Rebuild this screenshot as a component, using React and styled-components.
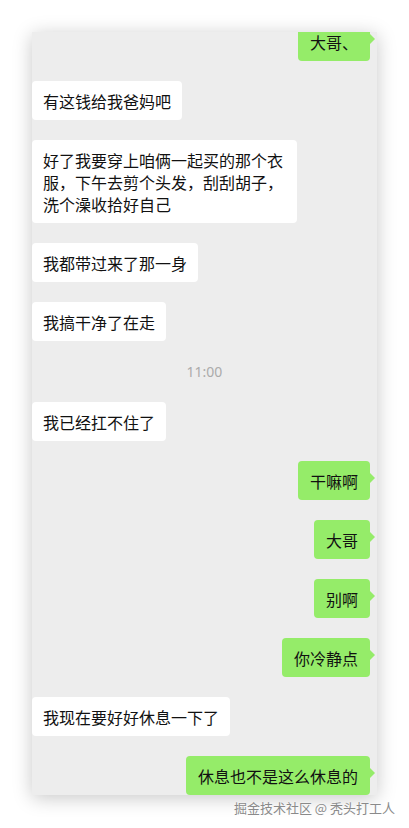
import React from 'react';
import styled, { createGlobalStyle } from 'styled-components';

const GlobalStyle = createGlobalStyle`
  body {
    margin: 0;
    background: #fff;
    font-family: "Noto Sans CJK SC", "Noto Sans", sans-serif;
  }
`;

const Page = styled.div`
  padding: 32px 32px 0;
  display: flex;
  flex-direction: column;
`;

const Panel = styled.section`
  width: 345px;
  height: 763px;
  background: #ededed;
  overflow: hidden;
  box-shadow: 0 3px 18px rgba(0, 0, 0, 0.22);
`;

const List = styled.div`
  display: flex;
  flex-direction: column;
  gap: 20px;
  margin-top: -10px;
`;

const Row = styled.div`
  display: flex;
  justify-content: ${p => (p.$me ? 'flex-end' : 'flex-start')};
  padding-right: ${p => (p.$me ? '7px' : '0')};
`;

const Bubble = styled.div`
  position: relative;
  box-sizing: border-box;
  max-width: 265px;
  padding: 9px ${p => (p.$me ? '12px' : '11px')} 8px;
  border-radius: 4px;
  background: ${p => (p.$me ? '#95ec69' : '#fff')};
  color: #111;
  font-size: 16px;
  line-height: 22px;

  &::after {
    content: '';
    position: absolute;
    top: 12px;
    ${p => (p.$me ? 'right: -10px;' : 'left: -10px;')}
    border: 5px solid transparent;
    ${p => (p.$me ? 'border-left-color: #95ec69;' : 'border-right-color: #fff;')}
  }
`;

const Time = styled.div`
  text-align: center;
  font-family: "Noto Sans", sans-serif;
  font-size: 14px;
  line-height: 21px;
  color: #ababab;
`;

const Mark = styled.div`
  align-self: flex-end;
  margin: 3px -18px 0 0;
  font-size: 13px;
  color: #8a8a8a;
  text-shadow: 0 0 2px #fff;
`;

const messages = [
  { me: true, text: '大哥、' },
  { text: '有这钱给我爸妈吧' },
  { text: '好了我要穿上咱俩一起买的那个衣服，下午去剪个头发，刮刮胡子，洗个澡收拾好自己' },
  { text: '我都带过来了那一身' },
  { text: '我搞干净了在走' },
  { time: '11:00' },
  { text: '我已经扛不住了' },
  { me: true, text: '干嘛啊' },
  { me: true, text: '大哥' },
  { me: true, text: '别啊' },
  { me: true, text: '你冷静点' },
  { text: '我现在要好好休息一下了' },
  { me: true, text: '休息也不是这么休息的' },
];

const App = () => {
  return (
    <Page>
      <GlobalStyle />
      <Panel>
        <List>
          {messages.map((m, i) =>
            m.time ? (
              <Time key={i}>{m.time}</Time>
            ) : (
              <Row key={i} $me={m.me}>
                <Bubble $me={m.me}>{m.text}</Bubble>
              </Row>
            )
          )}
        </List>
      </Panel>
      <Mark>掘金技术社区 @ 秃头打工人</Mark>
    </Page>
  );
};

export default App;
